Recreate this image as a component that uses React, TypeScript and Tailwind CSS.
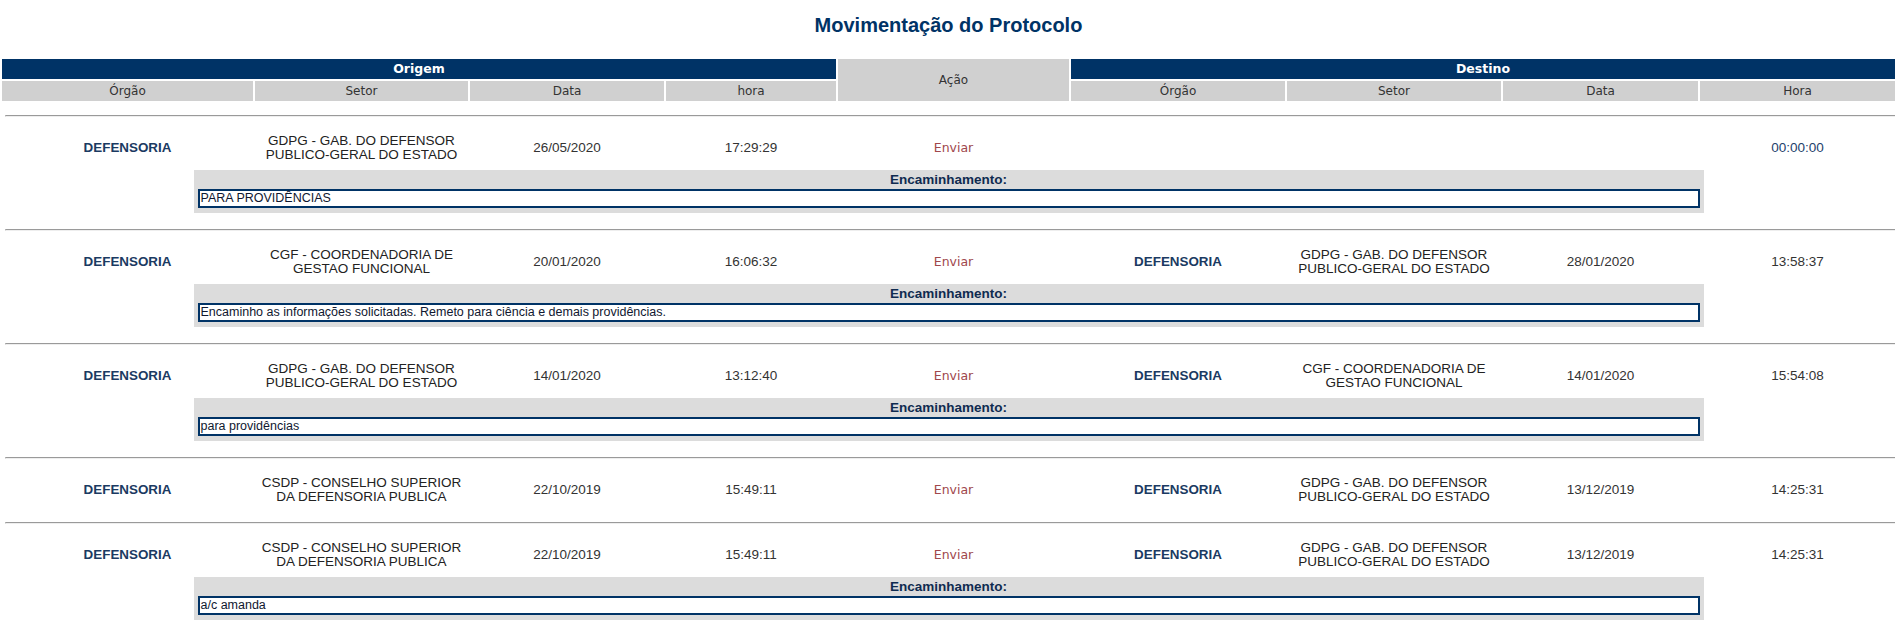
import { FC } from "react";

type Mov = {
	orgao: string;
	setor: string[];
	data: string;
	hora: string;
	dOrgao: string;
	dSetor: string[];
	dData: string;
	dHora: string;
	obs?: string;
};

const GDPG = ["GDPG - GAB. DO DEFENSOR", "PUBLICO-GERAL DO ESTADO"];
const CGF = ["CGF - COORDENADORIA DE", "GESTAO FUNCIONAL"];
const CSDP = ["CSDP - CONSELHO SUPERIOR", "DA DEFENSORIA PUBLICA"];

const movs: Mov[] = [
	{ orgao: "DEFENSORIA", setor: GDPG, data: "26/05/2020", hora: "17:29:29", dOrgao: "", dSetor: [], dData: "", dHora: "00:00:00", obs: "PARA PROVIDÊNCIAS" },
	{ orgao: "DEFENSORIA", setor: CGF, data: "20/01/2020", hora: "16:06:32", dOrgao: "DEFENSORIA", dSetor: GDPG, dData: "28/01/2020", dHora: "13:58:37", obs: "Encaminho as informações solicitadas. Remeto para ciência e demais providências." },
	{ orgao: "DEFENSORIA", setor: GDPG, data: "14/01/2020", hora: "13:12:40", dOrgao: "DEFENSORIA", dSetor: CGF, dData: "14/01/2020", dHora: "15:54:08", obs: "para providências" },
	{ orgao: "DEFENSORIA", setor: CSDP, data: "22/10/2019", hora: "15:49:11", dOrgao: "DEFENSORIA", dSetor: GDPG, dData: "13/12/2019", dHora: "14:25:31" },
	{ orgao: "DEFENSORIA", setor: CSDP, data: "22/10/2019", hora: "15:49:11", dOrgao: "DEFENSORIA", dSetor: GDPG, dData: "13/12/2019", dHora: "14:25:31", obs: "a/c amanda" },
];

const cols = "grid grid-cols-[251px_213px_194px_170px_231px_214px_214px_195px_195px] gap-x-[2px] px-[2px]";

const Setor: FC<{ lines: string[] }> = ({ lines }) => (
	<div className="text-center text-[13.5px] leading-[14px] text-[#222] whitespace-nowrap">
		{lines.map((l) => (
			<div key={l}>{l}</div>
		))}
	</div>
);

const Row: FC<{ m: Mov }> = ({ m }) => {
	const cell = "flex items-center justify-center";
	return (
		<div className={m.obs ? "pb-[16px]" : "pb-[15px]"}>
			<div className="ml-[5px] mr-[2px] h-[2px] border-t border-t-[#9a9a9a] border-b border-b-[#eeeeee] border-l border-l-[#cccccc]" />
			<div className={`${cols} mt-[14px] h-[34px] font-['Liberation_Sans',Arial,sans-serif]`}>
				<div className={`${cell} text-[13.4px] font-bold text-[#1b3a62]`}>{m.orgao}</div>
				<div className={cell}>
					<Setor lines={m.setor} />
				</div>
				<div className={`${cell} text-[13.5px] text-[#333]`}>{m.data}</div>
				<div className={`${cell} text-[13.5px] text-[#333]`}>{m.hora}</div>
				<div className={`${cell} pt-[1px] text-[12.5px] text-[#a0474c] font-['DejaVu_Sans',Verdana,sans-serif]`}>Enviar</div>
				<div className={`${cell} text-[13.4px] font-bold text-[#1b3a62]`}>{m.dOrgao}</div>
				<div className={cell}>
					<Setor lines={m.dSetor} />
				</div>
				<div className={`${cell} text-[13.5px] text-[#333]`}>{m.dData}</div>
				<div className={`${cell} text-[13.5px] ${m.dOrgao ? "text-[#333]" : "text-[#24426c]"}`}>{m.dHora}</div>
			</div>
			{m.obs && (
				<div className="w-[1510px] mx-auto mt-[5px] h-[43px] bg-[#dcdcdc] px-[4px] font-['Liberation_Sans',Arial,sans-serif]">
					<div className="h-[19px] pt-[2px] flex items-center justify-center text-[13.5px] font-bold text-[#0f2b50]">
						Encaminhamento:
					</div>
					<div className="h-[19px] bg-white border-2 border-[#003366] flex items-center px-[1px] text-[12.5px] text-[#101830] whitespace-nowrap">
						{m.obs}
					</div>
				</div>
			)}
		</div>
	);
};

const App: FC = () => {
	return (
		<div className="w-[1897px] bg-white">
			<h1 className="h-[50px] flex items-center justify-center text-[20px] font-bold text-[#003366] font-['Liberation_Sans',Arial,sans-serif]">
				Movimentação do Protocolo
			</h1>
			<div className={`${cols} grid-rows-[20px_20px] gap-y-[2px] py-[2px] mt-[7px] font-['DejaVu_Sans',Verdana,sans-serif] text-[12px]`}>
				<div className="col-span-4 bg-[#003366] text-white font-bold text-[12.5px] flex items-center justify-center">
					Origem
				</div>
				<div className="row-span-2 bg-[#d0d0d0] text-[#333] flex items-center justify-center">
					Ação
				</div>
				<div className="col-span-4 bg-[#003366] text-white font-bold text-[12.5px] flex items-center justify-center">
					Destino
				</div>
				{["Órgão", "Setor", "Data", "hora"].map((h) => (
					<div key={"o" + h} className="bg-[#d0d0d0] text-[#333] flex items-center justify-center">
						{h}
					</div>
				))}
				{["Órgão", "Setor", "Data", "Hora"].map((h) => (
					<div key={"d" + h} className="bg-[#d0d0d0] text-[#333] flex items-center justify-center">
						{h}
					</div>
				))}
			</div>
			<div className="mt-[12px]">
				{movs.map((m, i) => (
					<Row key={i} m={m} />
				))}
			</div>
		</div>
	);
};

export default App;
